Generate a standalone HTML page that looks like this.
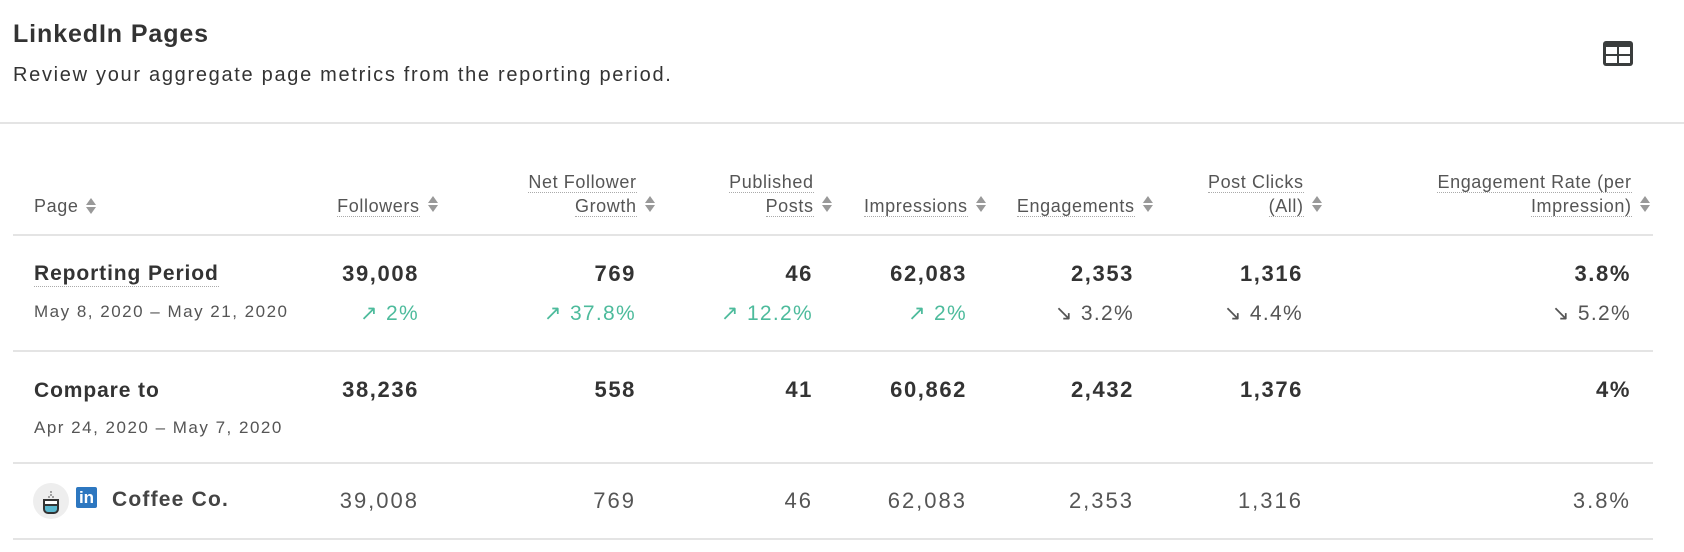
<!DOCTYPE html>
<html><head><meta charset="utf-8"><style>
body{margin:0;width:1684px;height:552px;background:#fff;font-family:"Liberation Sans",sans-serif;color:#3a3a3a;position:relative;overflow:hidden}
.a{position:absolute;white-space:nowrap}
.r{position:absolute;white-space:nowrap;text-align:right;line-height:1}
.line{position:absolute;height:2px;background:#e4e4e4}
.h{font-size:18px;color:#555;line-height:24px;letter-spacing:0.6px;margin-right:-0.6px}
.h u{text-decoration:none;border-bottom:1px dotted #aaa}
.s{display:inline-block;width:10px;height:16px;position:relative;margin-left:8px;vertical-align:-2px}
.s:before{content:"";position:absolute;left:0;top:0;border-left:5px solid transparent;border-right:5px solid transparent;border-bottom:7px solid #999}
.s:after{content:"";position:absolute;left:0;top:9px;border-left:5px solid transparent;border-right:5px solid transparent;border-top:7px solid #999}
.b{font-size:22px;font-weight:bold;color:#333;letter-spacing:1.6px}
.n{font-size:22px;color:#555;letter-spacing:2px}
.g{font-size:21px;color:#4dbb9c;letter-spacing:1.3px}
.d{font-size:21px;color:#555;letter-spacing:1.3px}
</style></head><body>
<div class="a" style="left:13px;top:20px;font-size:25px;font-weight:bold;color:#333;letter-spacing:0.9px">LinkedIn Pages</div>
<div class="a" style="left:13px;top:64px;font-size:20px;color:#333;letter-spacing:1.7px">Review your aggregate page metrics from the reporting period.</div>
<svg class="a" style="left:1603px;top:41px" width="30" height="25" viewBox="0 0 30 25"><rect x="0" y="0" width="30" height="25" rx="3" fill="#3a3d3d"/><rect x="3" y="6" width="11" height="7" fill="#fff"/><rect x="16" y="6" width="11" height="7" fill="#fff"/><rect x="3" y="15" width="11" height="7" fill="#fff"/><rect x="16" y="15" width="11" height="7" fill="#fff"/></svg>
<div class="line" style="left:0;right:0;top:122px"></div>

<div class="a h" style="left:34px;top:194px"><u style="border:none">Page</u><span class="s"></span></div>
<div class="r h" style="right:1265px;top:194px"><u>Followers</u><span class="s" style="position:absolute;right:-18px;top:2px"></span></div>
<div class="r h" style="right:1048px;top:170px"><u>Net Follower</u><br><u>Growth</u><span class="s" style="position:absolute;right:-18px;top:26px"></span></div>
<div class="r h" style="right:871px;top:170px"><u>Published</u><br><u>Posts</u><span class="s" style="position:absolute;right:-18px;top:26px"></span></div>
<div class="r h" style="right:717px;top:194px"><u>Impressions</u><span class="s" style="position:absolute;right:-18px;top:2px"></span></div>
<div class="r h" style="right:550px;top:194px"><u>Engagements</u><span class="s" style="position:absolute;right:-18px;top:2px"></span></div>
<div class="r h" style="right:381px;top:170px"><u>Post Clicks</u><br><u>(All)</u><span class="s" style="position:absolute;right:-18px;top:26px"></span></div>
<div class="r h" style="right:53px;top:170px"><u>Engagement Rate (per</u><br><u>Impression)</u><span class="s" style="position:absolute;right:-18px;top:26px"></span></div>
<div class="line" style="left:13px;width:1640px;top:234px"></div>

<div class="a b" style="left:34px;top:262px;font-size:21px;letter-spacing:0.9px;border-bottom:1px dotted #aaa">Reporting Period</div>
<div class="a" style="left:34px;top:302px;font-size:17px;color:#555;letter-spacing:1.5px">May 8, 2020 – May 21, 2020</div>
<div class="r b" style="right:1265px;top:263px">39,008</div>
<div class="r b" style="right:1048px;top:263px">769</div>
<div class="r b" style="right:871px;top:263px">46</div>
<div class="r b" style="right:717px;top:263px">62,083</div>
<div class="r b" style="right:550px;top:263px">2,353</div>
<div class="r b" style="right:381px;top:263px">1,316</div>
<div class="r b" style="right:53px;top:263px">3.8%</div>
<div class="r g" style="right:1265px;top:303px">↗ 2%</div>
<div class="r g" style="right:1048px;top:303px">↗ 37.8%</div>
<div class="r g" style="right:871px;top:303px">↗ 12.2%</div>
<div class="r g" style="right:717px;top:303px">↗ 2%</div>
<div class="r d" style="right:550px;top:303px">↘ 3.2%</div>
<div class="r d" style="right:381px;top:303px">↘ 4.4%</div>
<div class="r d" style="right:53px;top:303px">↘ 5.2%</div>
<div class="line" style="left:13px;width:1640px;top:350px"></div>

<div class="a b" style="left:34px;top:379px;font-size:21px;letter-spacing:0.9px">Compare to</div>
<div class="a" style="left:34px;top:418px;font-size:17px;color:#555;letter-spacing:1.5px">Apr 24, 2020 – May 7, 2020</div>
<div class="r b" style="right:1265px;top:379px">38,236</div>
<div class="r b" style="right:1048px;top:379px">558</div>
<div class="r b" style="right:871px;top:379px">41</div>
<div class="r b" style="right:717px;top:379px">60,862</div>
<div class="r b" style="right:550px;top:379px">2,432</div>
<div class="r b" style="right:381px;top:379px">1,376</div>
<div class="r b" style="right:53px;top:379px">4%</div>
<div class="line" style="left:13px;width:1640px;top:462px"></div>

<svg class="a" style="left:33px;top:483px" width="36" height="36" viewBox="0 0 36 36"><circle cx="18" cy="18" r="18" fill="#eee"/><path d="M11 17h14v9a4 4 0 0 1-4 4h-6a4 4 0 0 1-4-4z" fill="#5bb8cf" stroke="#333" stroke-width="2"/><path d="M11 17h14v5H11z" fill="#fff" stroke="#333" stroke-width="2"/><circle cx="18" cy="9" r="1" fill="#888"/><circle cx="18" cy="12" r="1" fill="#888"/><circle cx="16" cy="14" r="1" fill="#888"/><circle cx="20" cy="14" r="1" fill="#888"/></svg>
<div class="a" style="left:76px;top:487px;width:21px;height:21px;background:#2d77c0;color:#fff;font-weight:bold;font-size:17px;line-height:21px;text-align:center;border-radius:2px">in</div>
<div class="a" style="left:112px;top:488px;font-size:21px;font-weight:bold;color:#444;letter-spacing:1.2px">Coffee Co.</div>
<div class="r n" style="right:1265px;top:490px">39,008</div>
<div class="r n" style="right:1048px;top:490px">769</div>
<div class="r n" style="right:871px;top:490px">46</div>
<div class="r n" style="right:717px;top:490px">62,083</div>
<div class="r n" style="right:550px;top:490px">2,353</div>
<div class="r n" style="right:381px;top:490px">1,316</div>
<div class="r n" style="right:53px;top:490px">3.8%</div>
<div class="line" style="left:13px;width:1640px;top:538px"></div>
</body></html>
